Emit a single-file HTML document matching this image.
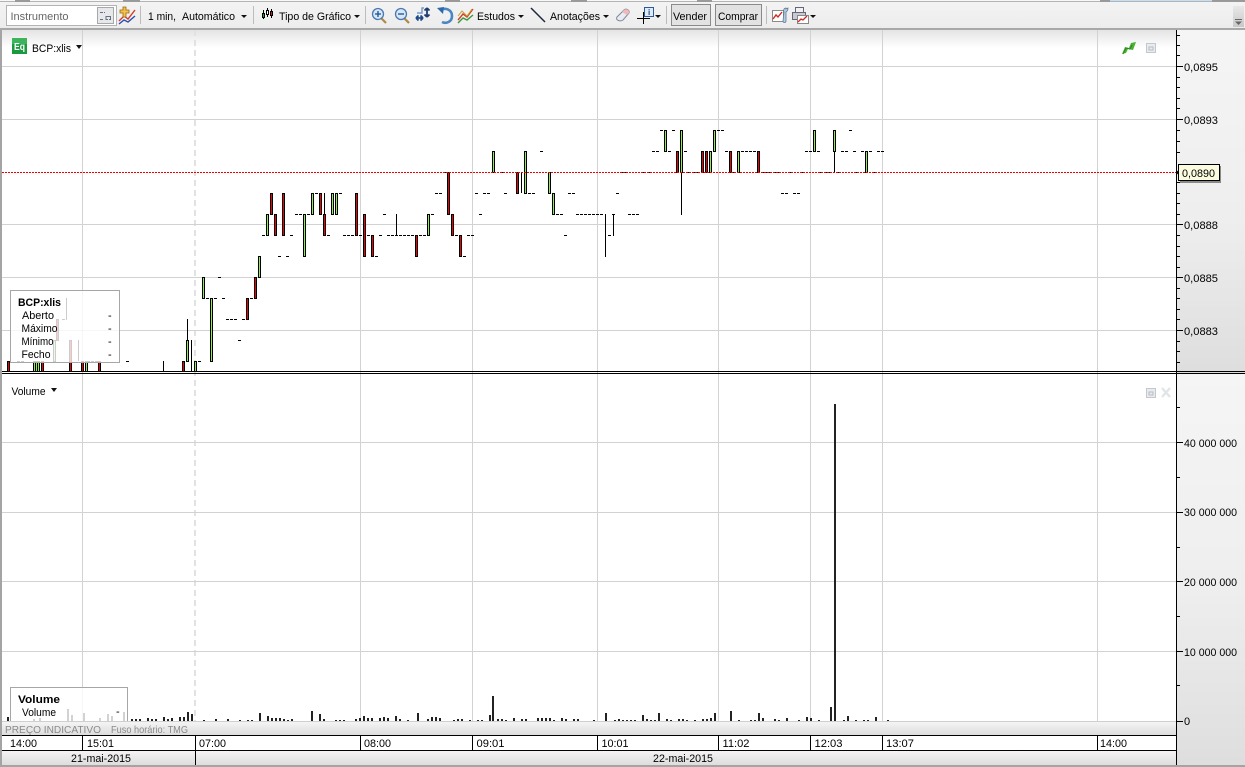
<!DOCTYPE html>
<html lang="pt">
<head>
<meta charset="utf-8">
<title>BCP:xlis</title>
<style>
html,body{margin:0;padding:0;background:#fff;width:1245px;height:767px;overflow:hidden}
svg{display:block;position:absolute;left:0;top:0}
text{font-family:"Liberation Sans",Arial,sans-serif;font-size:11px;fill:#000}
.c{shape-rendering:crispEdges;fill:none}
</style>
</head>
<body>
<svg width="1245" height="767" viewBox="0 0 1245 767" xmlns="http://www.w3.org/2000/svg">
<defs>
<linearGradient id="tb" x1="0" y1="0" x2="0" y2="1"><stop offset="0" stop-color="#f4f4f4"/><stop offset="1" stop-color="#ececec"/></linearGradient>
<linearGradient id="fade" x1="0" y1="0" x2="0" y2="1"><stop offset="0" stop-color="#e4e4e4"/><stop offset="1" stop-color="#ffffff"/></linearGradient>
<linearGradient id="ax" x1="0" y1="0" x2="0" y2="1"><stop offset="0" stop-color="#f5f5f5"/><stop offset=".55" stop-color="#eeeeee"/><stop offset="1" stop-color="#dedede"/></linearGradient>
<linearGradient id="st" x1="0" y1="0" x2="0" y2="1"><stop offset="0" stop-color="#f6f6f6"/><stop offset="1" stop-color="#dddddd"/></linearGradient>
<linearGradient id="sc" x1="0" y1="0" x2="0" y2="1"><stop offset="0" stop-color="#e8e8e8"/><stop offset="1" stop-color="#c8c8c8"/></linearGradient>
</defs>

<!-- backgrounds -->
<rect x="0" y="0" width="1245" height="767" fill="#fff"/>
<rect x="2" y="30" width="1174" height="18" fill="url(#fade)"/>
<rect x="1177" y="30" width="68" height="341" fill="url(#ax)"/>
<rect x="1177" y="374" width="68" height="391" fill="url(#ax)"/>

<!-- grid -->
<path class="c" stroke="#d2d2d2" d="M82.5 30V721M360.5 30V721M472.5 30V721M597.5 30V721M718.5 30V721M810.5 30V721M882.5 30V721M1097.5 30V721"/>
<path class="c" stroke="#e2e2e2" stroke-width="2" stroke-dasharray="6 4" d="M195 30V735"/>
<path class="c" stroke="#d2d2d2" d="M2 66.5H1176M2 119.5H1176M2 224.5H1176M2 277.5H1176M2 330.5H1176M2 442.5H1176M2 512.5H1176M2 581.5H1176M2 651.5H1176"/>

<!-- faded candles and dashes below legend -->
<path class="c" stroke="#000" d="M66.5 298V320M78.5 340V361"/>

<!-- price dashes -->
<path class="c" stroke="#000" stroke-dasharray="3 1" d="M17 361.5h3M21 361.5h3M62 319.5h3M87 361.5h11M126 361.5h3M198 361.5h3
M206 298.5h3M214 298.5h3M222 298.5h3M218 277.5h3M226 319.5h11M242 319.5h3M250 298.5h3M238 340.5h3
M262 235.5h3M290 235.5h3M327 235.5h3M343 235.5h11M359 235.5h3M367 235.5h3M379 235.5h3M387 235.5h7M395 235.5h19M419 235.5h7M455 235.5h3M467 235.5h7M564 235.5h3M608 235.5h3
M278 256.5h3M286 256.5h3M375 256.5h3M463 256.5h3
M295 214.5h7M307 214.5h3M383 214.5h3M431 214.5h3M479 214.5h3M556 214.5h7M576 214.5h27M612 214.5h3M628 214.5h11
M315 193.5h3M339 193.5h3M435 193.5h7M475 193.5h3M483 193.5h7M504 193.5h3M528 193.5h7M568 193.5h7M616 193.5h3M781 193.5h7M793 193.5h7
M443 172.5h3M501 172.5h3M620 172.5h3M624 172.5h3M643 172.5h7M688 172.5h11M733 172.5h3M761 172.5h19M790 172.5h3M801 172.5h3M820 172.5h11M836 172.5h3M856 172.5h3M872 172.5h3
M540 151.5h3M652 151.5h7M668 151.5h3M684 151.5h3M725 151.5h3M741 151.5h15M805 151.5h7M817 151.5h3M841 151.5h7M853 151.5h3M861 151.5h3M869 151.5h3M877 151.5h7
M660 130.5h3M672 130.5h3M717 130.5h7M849 130.5h3"/>

<!-- wicks -->
<path class="c" stroke="#000" d="M163.5 361V372M187.5 319V341M191.5 340V372M324.5 193V214M396.5 214V235M521.5 172V193M605.5 214V257M613.5 214V236M681.5 172V215M834.5 151V172"/>

<!-- candle bodies, black -->
<path class="c" stroke="#000" stroke-width="3" d="M8.5 361V372M34.5 361V372M36.5 361V372M38.5 361V372M42.5 361V372M70.5 340V372M82.5 361V372M86.5 361V372M99.5 361V372M57.5 319V341M54.5 340V362
M183.5 361V372M187.5 340V362M195.5 361V372M203.5 277V299M211.5 298V362M247.5 298V320M255.5 277V299M259.5 256V278M267.5 214V236M271.5 193V215M275.5 214V236M283.5 193V236
M304.5 214V257M312.5 193V215M320.5 193V215M324.5 214V236M332.5 193V215M336.5 193V215M356.5 193V236M364.5 214V257M372.5 235V257M416.5 235V257M428.5 214V236
M448.5 172V215M452.5 214V236M460.5 235V257M493.5 151V173M517.5 172V194M525.5 151V194M549.5 172V194M553.5 193V215
M665.5 130V152M677.5 151V173M681.5 130V173M702.5 151V173M706.5 151V173M710.5 151V173M714.5 130V152M730.5 151V173M738.5 151V173M758.5 151V173M814.5 130V152M834.5 130V152M866.5 151V173"/>
<!-- candle fill, green -->
<path class="c" stroke="#8fef4f" d="M34.5 362V372M36.5 362V372M38.5 362V372M86.5 362V372M54.5 341V361M187.5 341V361M195.5 362V372M203.5 278V298M211.5 299V361M259.5 257V277M267.5 215V235M304.5 215V256M312.5 194V214M332.5 194V214M336.5 194V214M428.5 215V235M493.5 152V172M525.5 152V193M549.5 173V193M553.5 194V214M665.5 131V151M681.5 131V172M710.5 152V172M714.5 131V151M738.5 152V172M814.5 131V151M834.5 131V151M866.5 152V172"/>
<!-- candle fill, red -->
<path class="c" stroke="#f00000" d="M8.5 362V372M42.5 362V372M70.5 341V372M82.5 362V372M99.5 362V372M57.5 320V340M183.5 362V372M247.5 299V319M255.5 278V298M271.5 194V214M275.5 215V235M283.5 194V235M320.5 194V214M324.5 215V235M356.5 194V235M364.5 215V256M372.5 236V256M416.5 236V256M448.5 173V214M452.5 215V235M460.5 236V256M517.5 173V193M677.5 152V172M702.5 152V172M706.5 152V172M730.5 152V172M758.5 152V172"/>

<!-- current price line -->
<path class="c" stroke="#f00000" stroke-dasharray="2 1" d="M2 172.5H1176"/>

<!-- volume bars -->
<path class="c" stroke="#222" stroke-width="2" d="M8 721v-4M34 721v-2M40 721v-3M68 721v-12M72 721v-6M84 721v-8M100 721v-3M108 721v-7M112 721v-5M124 721v-9
M132 721v-2M136 721v-2M140 721v-2M148 721v-3M152 721v-2M156 721v-2M164 721v-4M168 721v-2M172 721v-3M180 721v-4M184 721v-4M188 721v-9M192 721v-7M204 721v-1M216 721v-2M228 721v-2M240 721v-1M248 721v-1M252 721v-1M260 721v-8M268 721v-5M272 721v-3M276 721v-3M280 721v-3M284 721v-2M288 721v-1M292 721v-2M312 721v-10M320 721v-7M324 721v-2M336 721v-1M340 721v-1M344 721v-1M356 721v-2M360 721v-3M364 721v-5M368 721v-3M372 721v-3M380 721v-3M384 721v-4M388 721v-3M396 721v-5M400 721v-2M408 721v-1M418 721v-8M428 721v-2M432 721v-4M436 721v-4M440 721v-3
M454 721v-1M458 721v-2M462 721v-2M470 721v-1M478 721v-1M482 721v-1M490 721v-6M493 721v-25M498 721v-2M502 721v-2M506 721v-1M514 721v-3M522 721v-2M526 721v-2M538 721v-3M542 721v-3M546 721v-3M550 721v-3M554 721v-1M562 721v-3M566 721v-2M574 721v-2M578 721v-2M594 721v-1M606 721v-8M615 721v-1M619 721v-2M623 721v-1M627 721v-1M631 721v-1M635 721v-1M643 721v-6M647 721v-2M651 721v-1M655 721v-1M659 721v-8M667 721v-2M671 721v-1M679 721v-2M683 721v-2M687 721v-1M695 721v-1M703 721v-2M707 721v-2M711 721v-3M715 721v-8M731 721v-10M739 721v-1M751 721v-1M755 721v-1M759 721v-8M763 721v-3M775 721v-2M779 721v-1M787 721v-3M799 721v-1M807 721v-4M811 721v-3M819 721v-1M831 721v-14M835 721V404M844 721v-1M848 721v-5M856 721v-1M864 721v-1M868 721v-1M876 721v-4M888 721v-1"/>

<!-- legend overlays -->
<rect x="10.5" y="290.5" width="109" height="72" fill="#fff" fill-opacity=".8" stroke="#a6a6a6" shape-rendering="crispEdges"/>
<text x="18" y="306" textLength="43" lengthAdjust="spacingAndGlyphs" style="font-weight:bold">BCP:xlis</text>
<text x="22" y="319" textLength="32" lengthAdjust="spacingAndGlyphs">Aberto</text>
<text x="21.5" y="332" textLength="36" lengthAdjust="spacingAndGlyphs">Máximo</text>
<text x="21.5" y="345" textLength="32" lengthAdjust="spacingAndGlyphs">Mínimo</text>
<text x="21.5" y="358" textLength="29" lengthAdjust="spacingAndGlyphs">Fecho</text>
<text x="108" y="319">-</text><text x="108" y="332">-</text><text x="108" y="345">-</text><text x="108" y="358">-</text>

<rect x="10.5" y="687.5" width="117" height="40" fill="#fff" fill-opacity=".8" stroke="#a6a6a6" shape-rendering="crispEdges"/>
<text x="18" y="703" textLength="42" lengthAdjust="spacingAndGlyphs" style="font-weight:bold">Volume</text>
<text x="22" y="716" textLength="34" lengthAdjust="spacingAndGlyphs">Volume</text>
<text x="116" y="715">-</text>

<!-- pane titles -->
<rect x="12" y="38" width="15" height="16" fill="#1a9a3e"/>
<rect x="12" y="38" width="15" height="6" fill="#3cb45c"/>
<text x="14" y="50" style="font-size:10px;font-weight:bold;fill:#fff" textLength="11" lengthAdjust="spacingAndGlyphs">Eq</text>
<text x="32" y="52" textLength="39" lengthAdjust="spacingAndGlyphs">BCP:xlis</text>
<path d="M76 45h6l-3 4z" fill="#111"/>
<text x="11.5" y="395" textLength="34" lengthAdjust="spacingAndGlyphs">Volume</text>
<path d="M51 388h6l-3 4z" fill="#111"/>

<!-- pane corner icons -->
<path d="M1122 54l3-7 4 1 2-5 5-1-3 8-5-1-2 4z" fill="#4cb030"/>
<path d="M1123 54l3-6 4 1 2-4" fill="none" stroke="#2c8a20"/>
<rect x="1146.5" y="43.5" width="9" height="9" fill="#e8ecf0" stroke="#c4c8cc" shape-rendering="crispEdges"/>
<rect x="1149" y="47" width="4" height="3" fill="none" stroke="#b8bcc0" shape-rendering="crispEdges"/>
<rect x="1146.5" y="388.5" width="9" height="9" fill="#e8ecf0" stroke="#c4c8cc" shape-rendering="crispEdges"/>
<rect x="1149" y="392" width="4" height="3" fill="none" stroke="#b8bcc0" shape-rendering="crispEdges"/>
<path d="M1162 388l8 9M1170 388l-8 9" stroke="#e2e5e7" stroke-width="2.4" fill="none"/>

<!-- axis -->
<path class="c" stroke="#000" d="M1176.500 30V765"/>
<path class="c" stroke="#000" d="M1177 35.5h3M1177 45.5h3M1177 55.5h3M1177 66.5h6M1177 77.5h3M1177 87.5h3M1177 98.5h3M1177 108.5h3M1177 119.5h6M1177 130.5h3M1177 141.5h3M1177 152.5h3M1177 193.5h3M1177 182.5h3M1177 203.5h3M1177 214.5h3M1177 224.5h6M1177 235.5h3M1177 246.5h3M1177 256.5h3M1177 267.5h3M1177 277.5h6M1177 288.5h3M1177 298.5h3M1177 309.5h3M1177 319.5h3M1177 330.5h6M1177 341.5h3M1177 351.5h3M1177 362.5h3
M1177 407.5h3M1177 442.5h6M1177 477.5h3M1177 512.5h6M1177 547.5h3M1177 581.5h6M1177 616.5h3M1177 651.5h6M1177 685.5h3M1177 721.5h6"/>
<text x="1184" y="71" textLength="34" lengthAdjust="spacingAndGlyphs">0,0895</text>
<text x="1184" y="124" textLength="34" lengthAdjust="spacingAndGlyphs">0,0893</text>
<text x="1184" y="229" textLength="34" lengthAdjust="spacingAndGlyphs">0,0888</text>
<text x="1184" y="282" textLength="34" lengthAdjust="spacingAndGlyphs">0,0885</text>
<text x="1184" y="335" textLength="34" lengthAdjust="spacingAndGlyphs">0,0883</text>
<text x="1184" y="447" textLength="53" lengthAdjust="spacingAndGlyphs">40 000 000</text>
<text x="1184" y="516" textLength="53" lengthAdjust="spacingAndGlyphs">30 000 000</text>
<text x="1184" y="586" textLength="53" lengthAdjust="spacingAndGlyphs">20 000 000</text>
<text x="1184" y="656" textLength="53" lengthAdjust="spacingAndGlyphs">10 000 000</text>
<text x="1184" y="725">0</text>

<!-- price tag -->
<rect x="1180" y="166" width="41" height="17" fill="#8a8a8a"/>
<path d="M1176 172.5l3-3v6z" fill="#000"/>
<rect x="1178.5" y="164.5" width="41" height="16" fill="#fbfbdf" stroke="#000" shape-rendering="crispEdges"/>
<text x="1182" y="177" textLength="33" lengthAdjust="spacingAndGlyphs">0,0890</text>

<!-- divider -->
<path class="c" stroke="#000" d="M2 371.5H1245M2 373.5H1245"/>
<rect x="1177" y="372" width="68" height="1" fill="#ddd"/>

<!-- bottom strips -->
<rect x="2" y="721" width="1174" height="14" fill="url(#st)"/>
<path class="c" stroke="#cfcfcf" d="M2 721.5H1176"/>
<text x="5" y="733" style="font-size:10.5px;fill:#8a8a8a" textLength="96" lengthAdjust="spacingAndGlyphs">PREÇO INDICATIVO</text>
<text x="111" y="733" style="font-size:10.5px;fill:#8a8a8a" textLength="77" lengthAdjust="spacingAndGlyphs">Fuso horário: TMG</text>
<rect x="2" y="735" width="1174" height="15" fill="#fff"/>
<rect x="2" y="750" width="1174" height="15" fill="url(#st)"/>
<path class="c" stroke="#000" d="M2 735.5H1176M2 750.5H1176M82.5 735V750M195.5 735V765M360.5 735V750M472.5 735V750M597.5 735V750M718.5 735V750M810.5 735V750M882.5 735V750M1097.5 735V750"/>
<text x="10" y="747" textLength="27" lengthAdjust="spacingAndGlyphs">14:00</text>
<text x="87" y="747" textLength="27" lengthAdjust="spacingAndGlyphs">15:01</text>
<text x="199" y="747" textLength="27" lengthAdjust="spacingAndGlyphs">07:00</text>
<text x="364" y="747" textLength="27" lengthAdjust="spacingAndGlyphs">08:00</text>
<text x="476.5" y="747" textLength="28" lengthAdjust="spacingAndGlyphs">09:01</text>
<text x="601.5" y="747" textLength="27" lengthAdjust="spacingAndGlyphs">10:01</text>
<text x="722.5" y="747" textLength="27" lengthAdjust="spacingAndGlyphs">11:02</text>
<text x="814.5" y="747" textLength="28" lengthAdjust="spacingAndGlyphs">12:03</text>
<text x="886" y="747" textLength="28" lengthAdjust="spacingAndGlyphs">13:07</text>
<text x="1100" y="747" textLength="27" lengthAdjust="spacingAndGlyphs">14:00</text>
<text x="71" y="762" textLength="60" lengthAdjust="spacingAndGlyphs">21-mai-2015</text>
<text x="653" y="762" textLength="60" lengthAdjust="spacingAndGlyphs">22-mai-2015</text>

<!-- frame -->
<rect x="0" y="29" width="2" height="738" fill="#a4a4a4"/>
<rect x="0" y="765" width="1245" height="2" fill="#a4a4a4"/>

<!-- toolbar -->
<rect x="0" y="0" width="1245" height="29" fill="url(#tb)"/>
<rect x="0" y="28" width="1245" height="2" fill="#a8a8a8"/>
<rect x="0" y="1" width="1245" height="1" fill="#b4b4b4"/>
<rect x="0" y="0" width="1245" height="1" fill="#f8f8f8"/>
<path d="M1110 0h102v1h-102z" fill="#bfe0f8"/>
<path d="M15 0h15v2H15zM123 0h17v2h-17zM445 0h15v2h-15zM571 0h16v2h-16zM697 0h15v2h-15zM1100 0h10v2h-10zM1212 0h33v2h-33z" fill="#9a9a9a"/>

<rect x="6.5" y="5.5" width="110" height="20" fill="#fff" stroke="#b4b4b4" shape-rendering="crispEdges"/>
<text x="10.5" y="20" style="fill:#666" textLength="58" lengthAdjust="spacingAndGlyphs">Instrumento</text>
<rect x="97.5" y="7.5" width="16" height="16" fill="#e6e8ec" stroke="#a8a8a8" shape-rendering="crispEdges"/>
<path class="c" stroke="#66707c" d="M100 12.5h3M104 12.5h1M106 16.5h5M100 19.5h3M106 19.5h2M109 19.5h2M106 16V20M110.5 16V20"/>

<!-- add-instrument icon -->
<path d="M119 21l5-5 4 3 7-9" fill="none" stroke="#d43a2a" stroke-width="1.4"/>
<path d="M119 24l5-4 4 2 7-6" fill="none" stroke="#2c4fb0" stroke-width="1.4"/>
<path d="M123 7h3v3h3v3h-3v4h-3v-4h-3v-3h3z" fill="#f4c24a" stroke="#9a6a10" stroke-width=".8"/>

<!-- separators -->
<path class="c" stroke="#bcbcbc" d="M140.5 6V24M253.5 6V24M365.5 6V24M666.5 6V24M766.5 6V24"/>

<text x="148" y="20" textLength="28" lengthAdjust="spacingAndGlyphs">1 min,</text>
<text x="182" y="20" textLength="53" lengthAdjust="spacingAndGlyphs">Automático</text>
<path d="M241 15h6l-3 3z" fill="#111"/>

<!-- candle icon -->
<path class="c" stroke="#000" d="M263.5 10V19M267.5 8V17M271.5 9V18"/>
<path class="c" stroke="#000" stroke-width="3" d="M263.5 13V18M267.5 10V15M271.5 11V16"/>
<path class="c" stroke="#2ca02c" d="M263.5 14V17"/>
<path class="c" stroke="#fff" d="M267.5 11V14"/>
<path class="c" stroke="#d02020" d="M271.5 12V15"/>

<text x="279" y="20" textLength="72" lengthAdjust="spacingAndGlyphs">Tipo de Gráfico</text>
<path d="M354 15h6l-3 3z" fill="#111"/>

<!-- zoom in -->
<path d="M381 18l5 5" stroke="#b08a40" stroke-width="2.2" fill="none"/>
<circle cx="378" cy="14" r="5.5" fill="#d6e8f8" stroke="#4a78b0" stroke-width="1.3"/>
<path d="M375 14h6M378 11v6" stroke="#1c4f90" stroke-width="1.3" fill="none"/>
<!-- zoom out -->
<path d="M404 18l5 5" stroke="#b08a40" stroke-width="2.2" fill="none"/>
<circle cx="401" cy="14" r="5.5" fill="#d6e8f8" stroke="#4a78b0" stroke-width="1.3"/>
<path d="M398 14h6" stroke="#1c4f90" stroke-width="1.3" fill="none"/>
<!-- pan/fit -->
<path d="M416 18h7M416 18l2.5-2.500M416 18l2.500 2.500M423 18l-2.500-2.500M423 18l-2.500 2.500" stroke="#1e4a88" stroke-width="1.8" fill="none"/>
<path d="M427 8v9M427 8l-2.500 2.500M427 8l2.500 2.500M427 17l-2.500-2.500M427 17l2.500-2.500" stroke="#1e3c70" stroke-width="1.8" fill="none"/>
<path d="M417 13h5v-5h2" stroke="#7a9cc8" stroke-width="1.5" fill="none"/>
<!-- undo -->
<path d="M440 10c6-3 12 0 12 6s-6 8-10 6" fill="none" stroke="#4a86c4" stroke-width="2.6"/>
<path d="M437 8l7-1-1 7z" fill="#2e6aa8"/>
<!-- studies -->
<path d="M458 20l5-6 4 3 6-8" fill="none" stroke="#d0402a" stroke-width="1.4"/>
<path d="M458 23l5-5 4 2 6-5" fill="none" stroke="#3a9a3a" stroke-width="1.4"/>
<path d="M458 16l4-5 5 5 5-7" fill="none" stroke="#c8a030" stroke-width="1"/>
<text x="477" y="20" textLength="38" lengthAdjust="spacingAndGlyphs">Estudos</text>
<path d="M518 15h6l-3 3z" fill="#111"/>
<!-- line -->
<path d="M531 8l14 14" stroke="#1c2a3c" stroke-width="1.5" fill="none"/>
<text x="550" y="20" textLength="50" lengthAdjust="spacingAndGlyphs">Anotações</text>
<path d="M603 15h6l-3 3z" fill="#111"/>
<!-- eraser -->
<path d="M617 17l7-7c2-2 6 0 5 3l-6 7c-3 2-8 0-6-3z" fill="#e8ecf2" stroke="#7c8898" stroke-width="1"/>
<path d="M624 10c2-2 6 0 5 3l-2 2-5-3z" fill="#f0b8b8"/>
<!-- crosshair + info -->
<path class="c" stroke="#000" d="M637 18.5h13M643.5 12V24"/>
<rect x="644.5" y="7.5" width="9" height="9" fill="#dfeaf6" stroke="#2a5a9a" shape-rendering="crispEdges"/>
<text x="648" y="15" style="font-size:8px;font-weight:bold;fill:#1a4a8a">i</text>
<path d="M655 15h6l-3 3z" fill="#111"/>

<!-- buttons -->
<rect x="671.5" y="4.5" width="39" height="21" fill="#e2e2e2" stroke="#8a8a8a" shape-rendering="crispEdges"/>
<text x="673" y="20" textLength="34" lengthAdjust="spacingAndGlyphs">Vender</text>
<rect x="715.5" y="4.5" width="46" height="21" fill="#e2e2e2" stroke="#8a8a8a" shape-rendering="crispEdges"/>
<text x="718" y="20" textLength="40" lengthAdjust="spacingAndGlyphs">Comprar</text>

<!-- chart properties icon -->
<rect x="772.5" y="10.5" width="11" height="11" fill="#fff" stroke="#8a8a8a" shape-rendering="crispEdges"/>
<path d="M773 19l3-4 2 2 4-5" fill="none" stroke="#d02a20" stroke-width="1.4"/>
<path d="M786 8c-2 0-3 2-2 4l-1 9c0 2 3 2 3 0l0-9c2-1 2-3 2-4l-2 1z" fill="#b8cce0" stroke="#5a7a9c" stroke-width=".8"/>
<!-- print icon -->
<rect x="795.5" y="7.5" width="8" height="6" fill="#f2f2f2" stroke="#667" shape-rendering="crispEdges"/>
<rect x="792.5" y="12.5" width="13" height="7" fill="#c8ccd2" stroke="#667" shape-rendering="crispEdges"/>
<rect x="797.5" y="15.5" width="11" height="8" fill="#fff" stroke="#888" shape-rendering="crispEdges"/>
<path d="M798 22l3-3 2 1 4-4" fill="none" stroke="#d02a20" stroke-width="1.3"/>
<path d="M810 15h6l-3 3z" fill="#111"/>

<!-- toolbar scroll chevron -->
<rect x="1233" y="6" width="11" height="21" fill="url(#sc)"/>
<path class="c" stroke="#666" d="M1235 19.5h7"/>
<path d="M1235 21.5h7l-3.500 3.500z" fill="#666"/>
</svg>
</body>
</html>
